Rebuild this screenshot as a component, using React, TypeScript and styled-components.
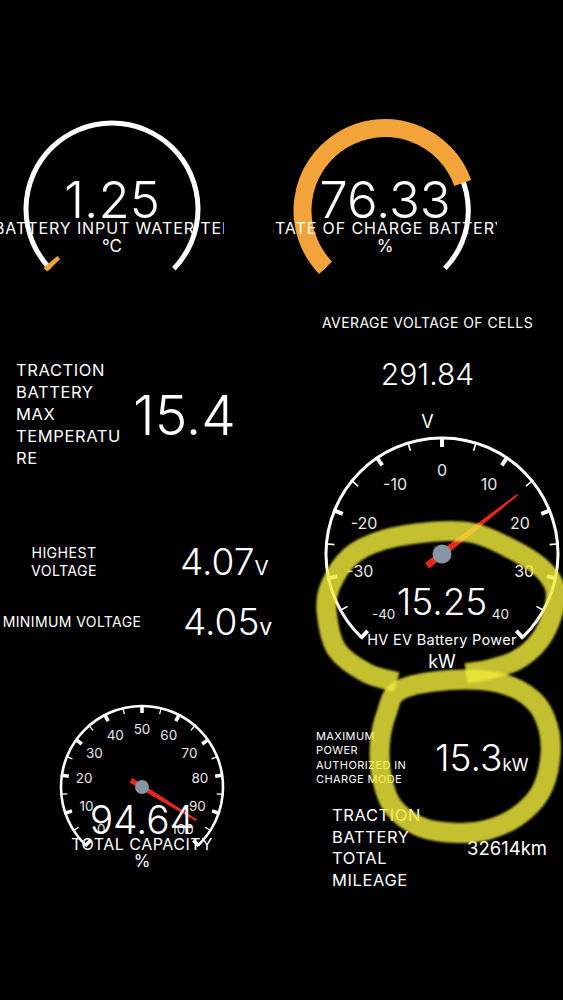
import React from "react";
import styled, { createGlobalStyle } from "styled-components";

const FONT = `Inter, "Liberation Sans", Arial, sans-serif`;

const GlobalStyle = createGlobalStyle`
  html, body { margin: 0; padding: 0; background: #000; }
  body { font-family: ${FONT}; color: #fff; }
`;

const Screen = styled.div`
  position: relative;
  width: 563px;
  height: 1000px;
  overflow: hidden;
  background: #000;
  display: grid;
  grid-template-columns: 270px 293px;
  font-family: ${FONT};
  color: #fff;
`;

const Column = styled.div`
  display: flex;
  flex-direction: column;
  padding-top: 110px;
  min-width: 0;
`;

const Panel = styled.div<{ $h: number; $pt?: number; $pl?: number }>`
  flex: none;
  box-sizing: border-box;
  height: ${(p) => p.$h}px;
  padding-top: ${(p) => p.$pt ?? 0}px;
  padding-left: ${(p) => p.$pl ?? 0}px;
`;

const StatRow = styled.div`
  display: flex;
  align-items: center;
`;

const StatLabel = styled.div<{ $w: number; $size: number; $lh: number; $center?: boolean; $ls?: number }>`
  flex: none;
  width: ${(p) => p.$w}px;
  font-size: ${(p) => p.$size}px;
  line-height: ${(p) => p.$lh}px;
  letter-spacing: ${(p) => p.$ls ?? 0.4}px;
  text-align: ${(p) => (p.$center ? "center" : "left")};
  overflow-wrap: anywhere;
`;

const ValueGroup = styled.div<{ $ml: number }>`
  display: flex;
  align-items: baseline;
  margin-left: ${(p) => p.$ml}px;
  white-space: nowrap;
`;

const Num = styled.span<{ $size: number; $lh: number; $thin?: boolean }>`
  font-size: ${(p) => p.$size}px;
  line-height: ${(p) => p.$lh}px;
  font-weight: ${(p) => (p.$thin ? 300 : 400)};
`;

const Unit = styled.span<{ $size: number }>`
  font-size: ${(p) => p.$size}px;
  line-height: 1;
`;

const CenterStack = styled.div<{ $w: number }>`
  width: ${(p) => p.$w}px;
  display: flex;
  flex-direction: column;
  align-items: center;
`;

const TextLine = styled.div<{ $size: number; $lh: number; $mt?: number; $ls?: number; $thin?: boolean }>`
  font-size: ${(p) => p.$size}px;
  line-height: ${(p) => p.$lh}px;
  margin-top: ${(p) => p.$mt ?? 0}px;
  letter-spacing: ${(p) => p.$ls ?? 0}px;
  font-weight: ${(p) => (p.$thin ? 300 : 400)};
  white-space: nowrap;
`;

const GaugeFrame = styled.div<{ $w: number; $h: number; $ml: number }>`
  flex: none;
  display: grid;
  grid-template-columns: minmax(0, 1fr);
  grid-template-rows: minmax(0, 1fr);
  width: ${(p) => p.$w}px;
  height: ${(p) => p.$h}px;
  margin-left: ${(p) => p.$ml}px;
  & > * {
    grid-area: 1 / 1;
  }
`;

const GaugeArt = styled.svg`
  display: block;
  width: 100%;
  height: 100%;
  overflow: visible;
`;

const GaugeReadout = styled.div<{ $pt: number }>`
  display: flex;
  flex-direction: column;
  align-items: center;
  padding-top: ${(p) => p.$pt}px;
  min-width: 0;
`;

const ClipLabel = styled.div<{ $start?: boolean }>`
  align-self: stretch;
  display: flex;
  justify-content: ${(p) => (p.$start ? "flex-start" : "center")};
  overflow: hidden;
  white-space: nowrap;
  font-size: 16px;
  line-height: 16px;
  letter-spacing: 0.9px;
`;

const ClipText = styled.span<{ $shift: number }>`
  flex: none;
  margin-left: ${(p) => p.$shift}px;
`;

const Overlay = styled.svg`
  position: absolute;
  left: 0;
  top: 0;
  width: 563px;
  height: 1000px;
  pointer-events: none;
`;

/* ---------- geometry helpers ---------- */
const pt = (cx: number, cy: number, r: number, a: number): [number, number] => {
  const t = (a * Math.PI) / 180;
  return [cx + r * Math.sin(t), cy - r * Math.cos(t)];
};

const arcD = (cx: number, cy: number, r: number, a0: number, a1: number) => {
  const [x0, y0] = pt(cx, cy, r, a0);
  const [x1, y1] = pt(cx, cy, r, a1);
  const large = a1 - a0 > 180 ? 1 : 0;
  return `M${x0.toFixed(2)} ${y0.toFixed(2)} A${r} ${r} 0 ${large} 1 ${x1.toFixed(2)} ${y1.toFixed(2)}`;
};

const smoothPath = (pts: number[][], closed: boolean) => {
  const n = pts.length;
  const get = (i: number) => {
    if (closed) return pts[(i + n) % n];
    return pts[Math.max(0, Math.min(n - 1, i))];
  };
  let d = `M${pts[0][0]} ${pts[0][1]}`;
  const segs = closed ? n : n - 1;
  for (let i = 0; i < segs; i++) {
    const p0 = get(i - 1);
    const p1 = get(i);
    const p2 = get(i + 1);
    const p3 = get(i + 2);
    const c1x = p1[0] + (p2[0] - p0[0]) / 6;
    const c1y = p1[1] + (p2[1] - p0[1]) / 6;
    const c2x = p2[0] - (p3[0] - p1[0]) / 6;
    const c2y = p2[1] - (p3[1] - p1[1]) / 6;
    d += ` C${c1x.toFixed(1)} ${c1y.toFixed(1)} ${c2x.toFixed(1)} ${c2y.toFixed(1)} ${p2[0]} ${p2[1]}`;
  }
  return closed ? d + " Z" : d;
};

/* ---------- arc gauge (top row) ---------- */
type ArcGaugeProps = {
  ml: number;
  cx: number;
  cy: number;
  r: number;
  bandR: number;
  frac: number;
  value: string;
  label: string;
  unit: string;
  start?: boolean;
  shift?: number;
};

const ORANGE = "#F2A33A";

function ArcGauge({ ml, cx, cy, r, bandR, frac, value, label, unit, start, shift = 0 }: ArcGaugeProps) {
  const a0 = -134;
  const a1 = 134;
  const av = a0 + (a1 - a0) * frac;
  return (
    <GaugeFrame $w={224} $h={172} $ml={ml}>
      <GaugeArt viewBox="0 0 224 172">
        <path d={arcD(cx, cy, r, a0, a1)} stroke="#fff" strokeWidth={5} fill="none" />
        <path d={arcD(cx, cy, bandR, a0, av)} stroke={ORANGE} strokeWidth={18} fill="none" />
      </GaugeArt>
      <GaugeReadout $pt={69.5}>
        <TextLine $size={51} $lh={40} $thin>{value}</TextLine>
        <ClipLabel $start={start}>
          <ClipText $shift={shift}>{label}</ClipText>
        </ClipLabel>
        <TextLine $size={17} $lh={18} $mt={1}>{unit}</TextLine>
      </GaugeReadout>
    </GaugeFrame>
  );
}

/* ---------- needle dial ---------- */
type DialProps = {
  cx: number;
  cy: number;
  r: number;
  ring: number;
  min: number;
  max: number;
  step: number;
  value: number;
  labelR: number;
  labelSize: number;
  edgeSize: number;
  major: [number, number];
  minor: [number, number];
  needleLen: number;
  tailLen: number;
  needleW: number;
  hubR: number;
};

function Dial(p: DialProps) {
  const sweep = 136;
  const ang = (v: number) => -sweep + ((v - p.min) / (p.max - p.min)) * 2 * sweep;
  const ticks: React.ReactNode[] = [];
  const half = p.step / 2;
  const count = Math.round((p.max - p.min) / half);
  for (let i = 0; i <= count; i++) {
    const a = ang(p.min + i * half);
    const isMajor = i % 2 === 0;
    const [w, len] = isMajor ? p.major : p.minor;
    const [x1, y1] = pt(p.cx, p.cy, p.r + p.ring / 2 - 0.3, a);
    const [x2, y2] = pt(p.cx, p.cy, p.r - len, a);
    ticks.push(<line key={i} x1={x1} y1={y1} x2={x2} y2={y2} stroke="#fff" strokeWidth={w} />);
  }
  const labels: React.ReactNode[] = [];
  for (let v = p.min; v <= p.max + 1e-6; v += p.step) {
    const a = ang(v);
    const [x, y] = pt(p.cx, p.cy, p.labelR, a);
    const edge = v === p.min || v === p.max;
    labels.push(
      <text
        key={v}
        x={x}
        y={y}
        textAnchor="middle"
        dominantBaseline="central"
        fill="#e8e8e8"
        fontSize={edge ? p.edgeSize : p.labelSize}
        fontFamily={FONT}
      >
        {v}
      </text>
    );
  }
  const na = ang(p.value);
  const w = p.needleW;
  return (
    <>
      <path d={arcD(p.cx, p.cy, p.r, -sweep, sweep)} stroke="#fff" strokeWidth={p.ring} fill="none" />
      {ticks}
      {labels}
      <g transform={`translate(${p.cx} ${p.cy}) rotate(${na})`}>
        <polygon
          points={`${-w},${p.tailLen} ${w},${p.tailLen} ${w},0 0.9,${-p.needleLen} -0.9,${-p.needleLen} ${-w},0`}
          fill="#E4281C"
        />
      </g>
      <circle cx={p.cx} cy={p.cy} r={p.hubR} fill="#8794A8" />
    </>
  );
}

/* ---------- annotation ---------- */
const loopTop = [
  [396.7, 682],
  [366.7, 673],
  [337, 650],
  [326.7, 613],
  [330, 586.7],
  [350, 556.7],
  [383, 540],
  [433, 531.7],
  [473, 533],
  [507, 546.7],
  [540, 566.7],
  [555, 588],
  [553, 612],
  [540, 640],
  [517, 660],
  [487, 670],
  [466, 673],
];

const loopBottom = [
  [400, 690],
  [450, 680],
  [500, 683],
  [533, 700],
  [548, 726.7],
  [550, 760],
  [540, 793],
  [516.7, 816.7],
  [486.7, 830],
  [456.7, 833],
  [420, 826.7],
  [393, 806.7],
  [381.7, 776.7],
  [380, 743],
  [386.7, 713],
];

export default function App() {
  return (
    <>
      <GlobalStyle />
      <Screen>
        <Column>
          <ArcGauge
            ml={0}
            cx={112}
            cy={99}
            r={86}
            bandR={81}
            frac={0.0125}
            value="1.25"
            label="BATTERY INPUT WATER TEMPERATURE"
            unit="°C"
            start
            shift={-6}
          />
          <Panel $h={240} $pt={78} $pl={16}>
            <StatRow>
              <StatLabel $w={110} $size={16.5} $lh={21.9} $ls={0.6}>
                TRACTION BATTERY MAX TEMPERATURE
              </StatLabel>
              <ValueGroup $ml={7}>
                <Num $size={55} $lh={60} $thin>15.4</Num>
              </ValueGroup>
            </StatRow>
          </Panel>
          <Panel $h={78} $pt={20}>
            <StatRow>
              <StatLabel $w={128} $size={14.2} $lh={17.7} $center>
                HIGHEST VOLTAGE
              </StatLabel>
              <ValueGroup $ml={52}>
                <Num $size={37} $lh={40} $thin>4.07</Num>
                <Unit $size={20.5}>V</Unit>
              </ValueGroup>
            </StatRow>
          </Panel>
          <Panel $h={90} $pt={1.6}>
            <StatRow>
              <StatLabel $w={144} $size={14} $lh={17.7} $center>
                MINIMUM VOLTAGE
              </StatLabel>
              <ValueGroup $ml={39}>
                <Num $size={37} $lh={40} $thin>4.05</Num>
                <Unit $size={23}>v</Unit>
              </ValueGroup>
            </StatRow>
          </Panel>
          <GaugeFrame $w={200} $h={200} $ml={42}>
            <GaugeArt viewBox="0 0 200 200">
              <Dial
                cx={100}
                cy={97}
                r={81}
                ring={2.6}
                min={0}
                max={100}
                step={10}
                value={94.64}
                labelR={58.5}
                labelSize={13.5}
                edgeSize={13.5}
                major={[3.6, 7]}
                minor={[1.3, 6]}
                needleLen={64}
                tailLen={13}
                needleW={2.6}
                hubR={7}
              />
            </GaugeArt>
            <GaugeReadout $pt={111.5}>
              <TextLine $size={39} $lh={35} $thin>94.64</TextLine>
              <TextLine $size={16} $lh={16} $mt={-0.5} $ls={0.5}>TOTAL CAPACITY</TextLine>
              <TextLine $size={17} $lh={18}>%</TextLine>
            </GaugeReadout>
          </GaugeFrame>
        </Column>

        <Column>
          <ArcGauge
            ml={3}
            cx={112}
            cy={100.5}
            r={83.3}
            bandR={82.5}
            frac={0.7633}
            value="76.33"
            label="STATE OF CHARGE BATTERY"
            unit="%"
          />
          <Panel $h={154} $pt={33} $pl={22}>
            <CenterStack $w={271}>
              <TextLine $size={14} $lh={16} $ls={0.45}>AVERAGE VOLTAGE OF CELLS</TextLine>
              <TextLine $size={30} $lh={34} $mt={26} $thin>291.84</TextLine>
              <TextLine $size={18} $lh={20} $mt={20.5}>V</TextLine>
            </CenterStack>
          </Panel>
          <GaugeFrame $w={242} $h={250} $ml={51}>
            <GaugeArt viewBox="0 0 242 250">
              <Dial
                cx={121}
                cy={118}
                r={116}
                ring={3}
                min={-40}
                max={40}
                step={10}
                value={15.25}
                labelR={84}
                labelSize={16}
                edgeSize={13.5}
                major={[4, 9]}
                minor={[1.6, 8]}
                needleLen={96}
                tailLen={19}
                needleW={3.4}
                hubR={9.5}
              />
            </GaugeArt>
            <GaugeReadout $pt={148.5}>
              <TextLine $size={37} $lh={34} $thin>15.25</TextLine>
              <TextLine $size={14.5} $lh={18} $mt={12.5} $ls={0.3}>HV EV Battery Power</TextLine>
              <TextLine $size={18} $lh={20} $mt={2.5}>kW</TextLine>
            </GaugeReadout>
          </GaugeFrame>
          <Panel $h={114} $pt={43.1} $pl={46}>
            <StatRow>
              <StatLabel $w={100} $size={11} $lh={14.3}>
                MAXIMUM POWER AUTHORIZED IN CHARGE MODE
              </StatLabel>
              <ValueGroup $ml={19}>
                <Num $size={37} $lh={40} $thin>15.3</Num>
                <Unit $size={17}>kW</Unit>
              </ValueGroup>
            </StatRow>
          </Panel>
          <Panel $h={200} $pt={5} $pl={62}>
            <StatRow>
              <StatLabel $w={100} $size={16.5} $lh={21.7} $ls={0.6}>
                TRACTION BATTERY TOTAL MILEAGE
              </StatLabel>
              <ValueGroup $ml={35}>
                <Num $size={18.5} $lh={22}>32614km</Num>
              </ValueGroup>
            </StatRow>
          </Panel>
        </Column>

        <Overlay viewBox="0 0 563 1000">
          <defs>
            <filter id="soft" x="-10%" y="-10%" width="120%" height="120%">
              <feGaussianBlur stdDeviation="1.2" />
            </filter>
          </defs>
          <g filter="url(#soft)" fill="none" strokeWidth={20} strokeLinejoin="round">
            <path d={smoothPath(loopTop, false)} stroke="#F0EA3A" strokeOpacity={0.82} />
            <path d={smoothPath(loopBottom, true)} stroke="#F0EA3A" strokeOpacity={0.82} />
          </g>
        </Overlay>
      </Screen>
    </>
  );
}
